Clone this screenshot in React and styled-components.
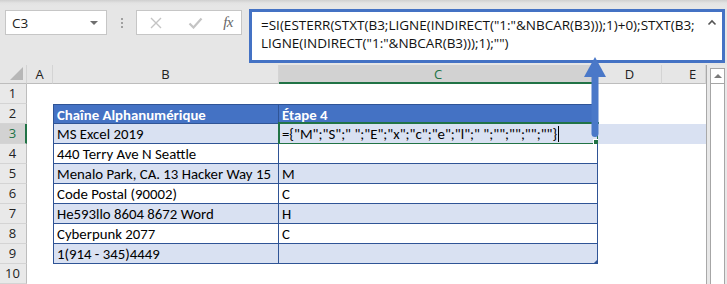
import React from "react";
import styled, { createGlobalStyle, css } from "styled-components";

const GlobalStyle = createGlobalStyle`
  html, body { margin: 0; padding: 0; background: #ffffff; overflow: hidden; }
  * { box-sizing: border-box; }
`;

const GREEN = "#217346";
const TBL = "#2f5496";
const HEAD = "#4472c4";
const BAND = "#d9e1f2";
const CELL_FONT = `Carlito, Lato, "Liberation Sans", sans-serif`;
const UI_FONT = `"Open Sans", "Noto Sans", sans-serif`;

const Screen = styled.div`
  position: relative;
  width: 727px;
  height: 284px;
  overflow: hidden;
  background: #e6e6e6;
`;

const Toolbar = styled.div`
  height: 65px;
  display: flex;
  align-items: flex-start;
  padding-top: 9px;
  background: linear-gradient(#cfcfcf 0px, #e3e3e3 3px, #e6e6e6 6px);
`;

const NameBox = styled.div`
  margin: 1px 0 0 5px;
  width: 102px;
  height: 25px;
  background: #fff;
  border: 1px solid #c6c6c6;
  display: flex;
  align-items: center;
  justify-content: space-between;
  padding: 0 6px 0 6px;
  font-family: ${UI_FONT};
  font-size: 13.5px;
  color: #222;
`;

const DropTri = styled.span`
  width: 0;
  height: 0;
  border-left: 4px solid transparent;
  border-right: 4px solid transparent;
  border-top: 4px solid #6f6f6f;
  margin-right: 2px;
`;

const Dots = styled.div`
  margin: 9px 0 0 14px;
  display: flex;
  flex-direction: column;
  gap: 2px;
  width: 2px;
  span { width: 2px; height: 2px; background: #a0a0a0; }
`;

const ButtonBox = styled.div`
  margin: 1px 0 0 13px;
  width: 106px;
  height: 25px;
  background: #fff;
  border: 1px solid #c6c6c6;
  display: flex;
  align-items: center;
  padding: 0 6px 0 12px;
`;

const IconSlot = styled.span`
  display: flex;
  align-items: center;
  justify-content: center;
  width: ${(p) => p.$w}px;
  margin-left: ${(p) => p.$ml || 0}px;
`;

const Fx = styled.span`
  font-family: "Liberation Serif", serif;
  font-style: italic;
  font-size: 15px;
  color: #666;
  letter-spacing: -0.5px;
  margin-left: auto;
  margin-right: 2px;
`;

const FormulaBar = styled.div`
  margin-left: 7px;
  width: 476px;
  height: 54px;
  background: #fff;
  border: 3px solid ${HEAD};
  display: flex;
  padding: 4px 3px 0 9px;
`;

const FormulaText = styled.div`
  flex: 1;
  font-family: ${UI_FONT};
  font-size: 13.5px;
  line-height: 18px;
  color: #111;
  white-space: pre;
`;

const Chevron = styled.div`
  width: 12px;
  padding-top: 3px;
  svg { display: block; }
`;

const Sheet = styled.div`
  display: grid;
  grid-template-columns: 27px 26px 226px 319px 64px 44px 21px;
  grid-template-rows: 19px repeat(10, 20px);
  background: #fff;
`;

const Corner = styled.div`
  background: #e6e6e6;
  border-right: 1px solid #d4d4d4;
  border-bottom: 1px solid #bdbdbd;
  position: relative;
  &::after {
    content: "";
    position: absolute;
    right: 3px;
    bottom: 3px;
    width: 0;
    height: 0;
    border-left: 13px solid transparent;
    border-bottom: 13px solid #b7b7b7;
  }
`;

const ColHead = styled.div`
  background: ${(p) => (p.$sel ? "#d2d2d2" : "#e6e6e6")};
  border-right: 1px solid #d4d4d4;
  border-bottom: ${(p) => (p.$sel ? `2px solid ${GREEN}` : "1px solid #bdbdbd")};
  color: ${(p) => (p.$sel ? GREEN : "#222")};
  font-family: ${UI_FONT};
  font-size: 13px;
  line-height: 18px;
  text-align: center;
  padding-left: ${(p) => p.$shift || 0}px;
`;

const RowHead = styled.div`
  background: ${(p) => (p.$sel ? "#d2d2d2" : "#e9e9e9")};
  border-bottom: 1px solid #d4d4d4;
  border-right: ${(p) => (p.$sel ? `2px solid ${GREEN}` : "1px solid #bdbdbd")};
  color: ${(p) => (p.$sel ? GREEN : "#222")};
  font-family: ${UI_FONT};
  font-size: 13px;
  line-height: 19px;
  text-align: center;
  padding-right: ${(p) => (p.$sel ? 0 : 1)}px;
`;

const Cell = styled.div`
  position: relative;
  font-family: ${CELL_FONT};
  font-size: 14.8px;
  line-height: 19px;
  padding: 1px 3px 0 3px;
  white-space: nowrap;
  color: #000;
  background: ${(p) =>
    p.$kind === "head" ? HEAD : p.$kind === "band" ? BAND : "#fff"};
  ${(p) => p.$kind === "head" && css`color: #fff; font-weight: 700;`}
  ${(p) =>
    p.$table &&
    css`
      border-right: 1px solid ${TBL};
      border-bottom: 1px solid ${TBL};
    `}
  ${(p) => p.$left && css`border-left: 1px solid ${TBL};`}
  ${(p) => p.$top && css`border-top: 1px solid ${TBL}; line-height: 18px;`}
`;

const Selection = styled.div`
  position: absolute;
  left: -1px;
  right: -2px;
  top: -2px;
  bottom: -2px;
  border: 2px solid ${GREEN};
  pointer-events: none;
  &::after {
    content: "";
    position: absolute;
    right: -4px;
    bottom: -4px;
    width: 6px;
    height: 6px;
    background: ${GREEN};
    border: 1px solid #fff;
  }
`;

const Caret = styled.span`
  display: inline-block;
  width: 1px;
  height: 16px;
  background: #000;
  vertical-align: -3px;
  margin-left: 1px;
`;

const ResizeMark = styled.div`
  position: absolute;
  right: -1px;
  bottom: -1px;
  width: 0;
  height: 0;
  border-left: 5px solid transparent;
  border-bottom: 5px solid ${TBL};
`;

const Scrollbar = styled.div`
  grid-column: 7;
  grid-row: 1 / span 11;
  background: #e8e8e8;
  border-left: 1px solid #a9a9a9;
  padding: 3px 2px 0 3px;
`;

const ScrollTrack = styled.div`
  height: 100%;
  background: #fff;
  border: 1px solid #a6a6a6;
  border-bottom: none;
`;

const ScrollUp = styled.div`
  height: 15px;
  border-bottom: 1px solid #a6a6a6;
  display: flex;
  align-items: center;
  justify-content: center;
  &::before {
    content: "";
    width: 0;
    height: 0;
    border-left: 4px solid transparent;
    border-right: 4px solid transparent;
    border-bottom: 4px solid #7a7a7a;
  }
`;

const ArrowOverlay = styled.svg`
  position: absolute;
  left: 584px;
  top: 56px;
  pointer-events: none;
`;

const formula = `={"M";"S";" ";"E";"x";"c";"e";"l";" ";"";"";"";""}`;

const rows = [
  null,
  ["Chaîne Alphanumérique", "Étape 4"],
  ["MS Excel 2019", formula],
  ["440 Terry Ave N Seattle", ""],
  ["Menalo Park, CA. 13 Hacker Way 15", "M"],
  ["Code Postal (90002)", "C"],
  ["He593llo 8604 8672 Word", "H"],
  ["Cyberpunk 2077", "C"],
  ["1(914 - 345)4449", ""],
  null,
];

export default function App() {
  return (
    <>
      <GlobalStyle />
      <Screen>
        <Toolbar>
          <NameBox>
            <span>C3</span>
            <DropTri />
          </NameBox>
          <Dots>
            <span />
            <span />
            <span />
          </Dots>
          <ButtonBox>
            <IconSlot $w={14}>
              <svg width="12" height="12" viewBox="0 0 12 12">
                <path d="M1 1 L11 11 M11 1 L1 11" stroke="#c4c4c4" strokeWidth="1.4" fill="none" />
              </svg>
            </IconSlot>
            <IconSlot $w={24} $ml={20}>
              <svg width="15" height="12" viewBox="0 0 15 12">
                <path d="M1.5 6.5 L5.5 10.5 L13.5 1.5" stroke="#c4c4c4" strokeWidth="2.2" fill="none" />
              </svg>
            </IconSlot>
            <Fx>fx</Fx>
          </ButtonBox>
          <FormulaBar>
            <FormulaText>
              {`=SI(ESTERR(STXT(B3;LIGNE(INDIRECT("1:"&NBCAR(B3)));1)+0);STXT(B3;\nLIGNE(INDIRECT("1:"&NBCAR(B3)));1);"")`}
            </FormulaText>
            <Chevron>
              <svg width="10" height="7" viewBox="0 0 10 7">
                <path d="M1.5 5.5 L5 2 L8.5 5.5" stroke="#555" strokeWidth="1.6" fill="none" />
              </svg>
            </Chevron>
          </FormulaBar>
        </Toolbar>

        <Sheet>
          <Corner />
          <ColHead>A</ColHead>
          <ColHead>B</ColHead>
          <ColHead $sel>C</ColHead>
          <ColHead>D</ColHead>
          <ColHead $shift={18}>E</ColHead>
          <Scrollbar>
            <ScrollTrack>
              <ScrollUp />
            </ScrollTrack>
          </Scrollbar>

          {rows.map((r, i) => {
            const n = i + 1;
            const inTable = !!r;
            const kind = n === 2 ? "head" : inTable && n % 2 === 1 ? "band" : "plain";
            const rowBand = n === 3;
            return (
              <React.Fragment key={n}>
                <RowHead $sel={n === 3}>{n}</RowHead>
                <Cell $kind="plain" />
                <Cell $kind={kind} $table={inTable} $left={inTable} $top={n === 2}>
                  {r ? r[0] : ""}
                </Cell>
                <Cell $kind={kind} $table={inTable} $top={n === 2}>
                  {r ? r[1] : ""}
                  {n === 3 && <Caret />}
                  {n === 3 && <Selection />}
                  {n === 9 && <ResizeMark />}
                </Cell>
                <Cell $kind={rowBand ? "band" : "plain"} />
                <Cell $kind={rowBand ? "band" : "plain"} />
              </React.Fragment>
            );
          })}
        </Sheet>

        <ArrowOverlay width="24" height="84" viewBox="0 0 24 84">
          <path d="M11 1 L22 21 L0 21 Z" fill="#4a78c8" />
          <rect x="7.5" y="18" width="7" height="63" rx="3.5" fill="#4a78c8" />
        </ArrowOverlay>
      </Screen>
    </>
  );
}
